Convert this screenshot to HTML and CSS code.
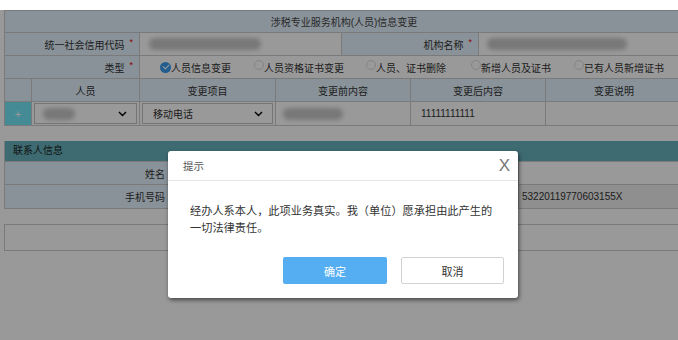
FILE: index.html
```html
<!DOCTYPE html>
<html lang="zh-CN">
<head>
    <meta charset="UTF-8">
    <meta name="viewport" content="width=device-width, initial-scale=1.0">
    <title>涉税专业服务机构(人员)信息变更</title>
    <link rel="stylesheet" href="styles.css">
</head>
<body>
    <div class="topbar"></div>

    <div class="page">
        <!-- 基本信息 -->
        <div class="form">
            <div class="row title-row">涉税专业服务机构(人员)信息变更</div>

            <div class="row">
                <div class="cell label w-label">统一社会信用代码<i class="req">*</i></div>
                <div class="cell w-code"><span class="blur blur-code"></span></div>
                <div class="cell label w-org">机构名称<i class="req">*</i></div>
                <div class="cell fill"><span class="blur blur-org"></span></div>
            </div>

            <div class="row">
                <div class="cell label w-label">类型<i class="req">*</i></div>
                <div class="cell fill radios">
                    <label class="radio checked"><span class="dot"></span>人员信息变更</label>
                    <label class="radio"><span class="dot"></span>人员资格证书变更</label>
                    <label class="radio"><span class="dot"></span>人员、证书删除</label>
                    <label class="radio"><span class="dot"></span>新增人员及证书</label>
                    <label class="radio"><span class="dot"></span>已有人员新增证书</label>
                </div>
            </div>

            <div class="row head">
                <div class="cell w-add"></div>
                <div class="cell w-person">人员</div>
                <div class="cell w-item">变更项目</div>
                <div class="cell w-before">变更前内容</div>
                <div class="cell w-after">变更后内容</div>
                <div class="cell fill">变更说明</div>
            </div>

            <div class="row data">
                <div class="cell w-add add-btn">+</div>
                <div class="cell w-person">
                    <div class="select"><span class="blur blur-person"></span>
                        <svg class="chev" width="9" height="6" viewBox="0 0 9 6"><polyline points="1,1 4.5,4.5 8,1" /></svg>
                    </div>
                </div>
                <div class="cell w-item">
                    <div class="select">移动电话
                        <svg class="chev" width="9" height="6" viewBox="0 0 9 6"><polyline points="1,1 4.5,4.5 8,1" /></svg>
                    </div>
                </div>
                <div class="cell w-before"><span class="blur blur-before"></span></div>
                <div class="cell w-after text">11111111111</div>
                <div class="cell fill"></div>
            </div>
        </div>

        <!-- 联系人信息 -->
        <div class="form contact">
            <div class="section-bar">联系人信息</div>
            <div class="row">
                <div class="cell label w-clabel">姓名</div>
                <div class="cell w-cvalue"></div>
                <div class="cell label w-clabel2"></div>
                <div class="cell fill"></div>
            </div>
            <div class="row">
                <div class="cell label w-clabel">手机号码</div>
                <div class="cell w-cvalue"></div>
                <div class="cell label w-clabel2"></div>
                <div class="cell fill readonly">53220119770603155X</div>
            </div>
        </div>

        <div class="form attach">
            <div class="row tall"></div>
        </div>
    </div>

    <div class="mask"></div>

    <div class="dialog">
        <div class="dialog-head">
            <span>提示</span>
            <span class="close">X</span>
        </div>
        <div class="dialog-body">经办人系本人，此项业务真实。我（单位）愿承担由此产生的一切法律责任。</div>
        <div class="dialog-foot">
            <button class="btn btn-ok">确定</button>
            <button class="btn btn-cancel">取消</button>
        </div>
    </div>
</body>
</html>
```

FILE: styles.css
```css
html, body {
    height: 100%;
}
body {
    margin: 0;
    position: relative;
    overflow: hidden;
    font-family: "Liberation Sans", "Noto Sans CJK SC", sans-serif;
    font-size: 10px;
    color: #333;
    background: #fff;
}
.topbar {
    height: 10px;
    background: #fff;
}
.page {
    padding-left: 4px;
}
.form {
    width: 679px;
    border: 1px solid #ccc;
    border-right: none;
    box-sizing: border-box;
}
.row {
    display: flex;
    height: 23px;
    border-bottom: 1px solid #ccc;
    box-sizing: border-box;
}
.row:last-child {
    border-bottom: none;
}
.title-row {
    height: 22px;
    justify-content: center;
    align-items: center;
    background: #e5f3ff;
    color: #444;
}
.cell {
    display: flex;
    align-items: center;
    flex-shrink: 0;
    border-right: 1px solid #ccc;
    box-sizing: border-box;
    height: 100%;
    padding: 0 2px;
    white-space: nowrap;
}
.fill {
    flex: 1;
    min-width: 0;
    overflow: hidden;
}
.label {
    justify-content: flex-end;
    padding-right: 6px;
    background: #e5f3ff;
}
.req {
    color: #e00;
    font-style: normal;
    font-size: 9px;
    margin-left: 5px;
    position: relative;
    top: -2px;
}
.w-label { width: 135px; }
.w-code { width: 202px; }
.w-org { width: 137px; }

/* radios */
.radios {
    padding-left: 20px;
}
.radio {
    display: flex;
    align-items: center;
    flex-shrink: 0;
}
.radio:nth-child(1) { margin-right: 23px; }
.radio:nth-child(2) { margin-right: 22px; }
.radio:nth-child(3) { margin-right: 25px; }
.radio:nth-child(4) { margin-right: 23px; }
.dot {
    width: 8px;
    height: 8px;
    border: 1px solid #ddd;
    border-radius: 50%;
    position: relative;
    top: -2px;
}
.radio.checked .dot {
    width: 11px;
    height: 11px;
    border: none;
    background: #3b9bf0;
    top: 0;
}
.radio.checked .dot::after {
    content: "";
    position: absolute;
    left: 3px;
    top: 2px;
    width: 5px;
    height: 3px;
    border-left: 1.5px solid #fff;
    border-bottom: 1.5px solid #fff;
    transform: rotate(-45deg);
}

/* change table */
.head {
    background: #e5f3ff;
}
.head .cell {
    justify-content: center;
}
.w-add { width: 27px; }
.w-person { width: 108px; }
.w-item { width: 136px; }
.w-before { width: 135px; }
.w-after { width: 135px; }
.add-btn {
    justify-content: center;
    background: #74e8fa;
    color: #fff;
    font-size: 11px;
}
.select {
    flex: 1;
    height: 19px;
    border: 1px solid #c4c4c4;
    display: flex;
    align-items: center;
    padding: 0 10px 0 10px;
    position: relative;
}
.chev {
    position: absolute;
    right: 9px;
    top: 7px;
    fill: none;
    stroke: #000;
    stroke-width: 1.4;
}
.text {
    padding-left: 10px;
}
.blur {
    display: block;
    height: 12px;
    background: #c8c8c8;
    border-radius: 6px;
    filter: blur(2px);
}
.blur-code { width: 112px; margin-left: 7px; }
.blur-org { width: 140px; margin-left: 6px; }
.blur-person { width: 32px; margin-left: -2px; }
.blur-before { width: 60px; margin-left: 5px; }

/* contact */
.contact {
    margin-top: 15px;
    border-top: none;
}
.section-bar {
    height: 21px;
    line-height: 20px;
    background: #66b3bc;
    padding-left: 8px;
    border-bottom: 1px solid #ccc;
    box-sizing: border-box;
    color: #222;
}
.w-clabel { width: 167px; }
.w-cvalue { width: 180px; }
.w-clabel2 { width: 167px; }
.readonly {
    background: #eee;
    padding-left: 3px;
}
.attach {
    margin-top: 15px;
}
.tall {
    height: 25px;
}

/* modal */
.mask {
    position: absolute;
    left: 0;
    right: 0;
    top: 10px;
    bottom: 0;
    background: rgba(0, 0, 0, 0.4);
}
.dialog {
    position: absolute;
    left: 168px;
    top: 151px;
    width: 350px;
    height: 147px;
    background: #fff;
    border-radius: 3px;
    box-shadow: 1px 2px 4px rgba(0, 0, 0, 0.55);
    display: flex;
    flex-direction: column;
    font-family: "Noto Sans CJK SC", sans-serif;
}
.dialog-head {
    height: 29px;
    border-bottom: 1px solid #e5e5e5;
    display: flex;
    align-items: center;
    justify-content: space-between;
    padding: 0 8px 0 15px;
    font-size: 10.5px;
    color: #555;
}
.close {
    font-family: "Liberation Sans", sans-serif;
    font-size: 17px;
    color: #777;
}
.dialog-body {
    flex: 1;
    padding: 21px 20px 0 22px;
    font-size: 11.2px;
    line-height: 17px;
    color: #333;
}
.dialog-foot {
    display: flex;
    justify-content: flex-end;
    gap: 14px;
    padding: 0 14px 14px 0;
}
.btn {
    height: 27px;
    border-radius: 2px;
    font-family: "Noto Sans CJK SC", sans-serif;
    font-size: 11px;
    cursor: pointer;
}
.btn-ok {
    width: 104px;
    border: none;
    background: #56aef2;
    color: #fff;
}
.btn-cancel {
    width: 103px;
    border: 1px solid #d2d2d2;
    background: #fff;
    color: #333;
}
```
